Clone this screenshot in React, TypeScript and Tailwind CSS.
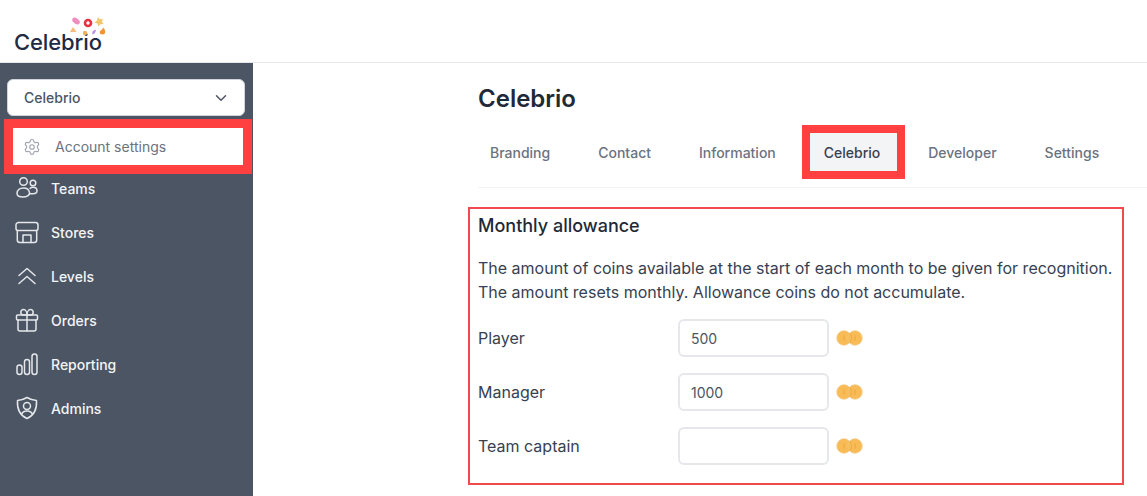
import { ChevronDown, Settings } from "lucide-react";

const font = { fontFamily: "Inter, sans-serif" };

function Logo() {
  return (
    <div className="relative w-[110px] h-[62px]">
      <span className="absolute left-[14px] top-[26px] text-[22px] leading-[32px] font-medium tracking-[-0.1px] text-[#1f2a44]">Celebrio</span>
      <svg className="absolute left-[70px] top-[17px]" width="36" height="22" viewBox="0 0 36 22">
        <ellipse cx="6" cy="4" rx="4.200" ry="2.600" transform="rotate(35 6 4)" fill="#ee8fc0" />
        <circle cx="18" cy="6" r="3" fill="none" stroke="#e8313f" strokeWidth="2.600" />
        <path d="M28 0l1.800 2.200 3-.4-.9 2.800 1.500 2.400-3 .2-2 2.200-1-2.800-2.800-1 2.400-2z" fill="#f2c66d" />
        <path d="M3 10l3.600 5H0z" fill="#f4bd7e" />
        <circle cx="15" cy="16" r="2.200" fill="#eab25c" />
        <ellipse cx="24" cy="15" rx="1.300" ry="2.600" transform="rotate(35 24 15)" fill="#b792e6" />
        <path d="M33 10.500c1.800 1.500 2.600 3.500 2 5.500-.6 1.600-3.400 2-4.800.8-1-1.200-.4-3 .8-3.600.8-.5 1.800-1.300 2-2.700z" fill="#f59331" />
      </svg>
    </div>
  );
}

const sw = { fill: "none", stroke: "#e5e7eb", strokeWidth: 1.5, strokeLinecap: "round" as const, strokeLinejoin: "round" as const };

function TeamsIcon() {
  return (
    <svg width="24" height="24" viewBox="0 0 24 24" {...sw}>
      <circle cx="8.500" cy="5.500" r="3.800" />
      <circle cx="18" cy="7" r="2.800" />
      <path d="M2 17.500c0-3.500 3-5.500 6.500-5.500 3.200 0 5.500 1.500 6 4.500.4 3-3 4.500-6.500 4.500-3.300 0-6-1.300-6-3.500z" />
      <path d="M15 12.300c1-.7 2-1 3-1 2.500 0 4 1.500 4 3.500 0 2-2 3-4 3h-3.300" />
    </svg>
  );
}
function StoreIcon() {
  return (
    <svg width="24" height="24" viewBox="0 0 24 24" {...sw}>
      <path d="M3.500 2.500h17A2.500 2.500 0 0 1 23 5v3.500a2 2 0 0 1-2 2H3a2 2 0 0 1-2-2V5a2.500 2.500 0 0 1 2.500-2.500z" />
      <path d="M2.300 10.500V20a2.500 2.500 0 0 0 2.500 2.500h14.400a2.500 2.500 0 0 0 2.500-2.500v-9.500" />
      <path d="M8 22.500v-7.500h8v7.500" />
    </svg>
  );
}
function LevelsIcon() {
  return (
    <svg width="24" height="24" viewBox="0 0 24 24" {...sw}>
      <path d="M4 11.500l8-7 8 7" />
      <path d="M4 19.500l8-7 8 7" />
    </svg>
  );
}
function GiftIcon() {
  return (
    <svg width="24" height="24" viewBox="0 0 24 24" {...sw}>
      <rect x="1.500" y="7" width="21" height="5" rx="1" />
      <path d="M3 12v9a2 2 0 0 0 2 2h14a2 2 0 0 0 2-2v-9" />
      <path d="M12 7v16" />
      <path d="M12 7H8.500a2.700 2.700 0 1 1 0-5.400C11 1.600 12 5 12 7z" />
      <path d="M12 7h3.500a2.700 2.700 0 1 0 0-5.400C13 1.600 12 5 12 7z" />
    </svg>
  );
}
function ReportIcon() {
  return (
    <svg width="24" height="24" viewBox="0 0 24 24" {...sw}>
      <rect x="2" y="13" width="5" height="9.500" rx="2.500" />
      <rect x="9.500" y="7.500" width="5" height="15" rx="2.500" />
      <rect x="17" y="2" width="5" height="20.500" rx="2.500" />
    </svg>
  );
}
function AdminIcon() {
  return (
    <svg width="24" height="24" viewBox="0 0 24 24" {...sw}>
      <path d="M12 1.500c3 1.800 6 2.700 9.500 3 .5 7.500-1.500 14.500-9.500 18-8-3.500-10-10.500-9.500-18 3.500-.3 6.500-1.200 9.500-3z" />
      <circle cx="12" cy="10" r="3.500" />
      <path d="M6.500 18.500c.8-2.500 3-3.500 5.500-3.500s4.700 1 5.500 3.500" />
    </svg>
  );
}

const menu = [
  { label: "Teams", icon: <TeamsIcon /> },
  { label: "Stores", icon: <StoreIcon /> },
  { label: "Levels", icon: <LevelsIcon /> },
  { label: "Orders", icon: <GiftIcon /> },
  { label: "Reporting", icon: <ReportIcon /> },
  { label: "Admins", icon: <AdminIcon /> },
];

function Coins() {
  return (
    <svg width="28" height="18" viewBox="0 0 28 18">
      <circle cx="8" cy="9" r="7.200" fill="#f8bb55" stroke="#f3c57a" strokeWidth="0.800" />
      <circle cx="19" cy="9" r="7.200" fill="#f8bb55" stroke="#f3c57a" strokeWidth="0.800" />
      <path d="M8 6.500v5M19 6.500v5" stroke="#e5a23c" strokeWidth="0.800" />
      <path d="M13.500 4a7.200 7.200 0 0 1 0 10" fill="none" stroke="#e9a746" strokeWidth="0.800" />
    </svg>
  );
}

const tabs = ["Branding", "Contact", "Information", "Celebrio", "Developer", "Settings"];
const rows = [
  { label: "Player", value: "500" },
  { label: "Manager", value: "1000" },
  { label: "Team captain", value: "" },
];

export default function App() {
  return (
    <div style={font} className="w-[1147px] h-[496px] overflow-hidden bg-white flex flex-col">
      <header className="h-[63px] shrink-0 border-b border-[#e5e7eb] bg-white">
        <Logo />
      </header>
      <div className="flex flex-1 min-h-0">
        <aside className="w-[253px] shrink-0 bg-[#4b5563]">
          <div className="pt-[16px] pl-[7px] pr-[8px]">
            <div className="h-[37px] rounded-md bg-white border border-[#d1d5db] flex items-center justify-between pl-4 pr-[14px] text-[14px] font-medium text-[#4b5563]">
              <span>Celebrio</span>
              <ChevronDown size={18} strokeWidth={2} color="#4b5563" />
            </div>
          </div>
          <div className="mt-[3px] ml-[4px] mr-[1px] h-[55px] border-[9px] border-[#ff4040] bg-white flex items-center pl-[10px] gap-[14px] text-[14px] font-normal text-[#6b7280]">
            <Settings size={18} strokeWidth={1.5} color="#9ca3af" />
            <span>Account settings</span>
          </div>
          <nav className="mt-[-8px] flex flex-col">
            {menu.map((m) => (
              <div key={m.label} className="h-[44px] flex items-center pl-[15px] gap-3 text-[14px] font-medium text-[#f3f4f6]">
                {m.icon}
                <span>{m.label}</span>
              </div>
            ))}
          </nav>
        </aside>
        <main className="flex-1 min-w-0 pl-[225px] pr-[23px]">
          <h1 className="mt-[20px] text-[24px] leading-[32px] font-semibold text-[#1f2937]">Celebrio</h1>
          <div className="mt-[10px] mr-[-23px] h-[63px] border-b border-[#f3f4f6] flex gap-6 items-start">
            {tabs.map((t) =>
              t === "Celebrio" ? (
                <div key={t} className="ml-[-10px] mr-[-13px] h-[54px] border-[8px] border-[#ff4040] flex items-center">
                  <span className="h-full flex items-center pl-[14px] pr-[17px] bg-[#f3f4f6] text-[14px] font-medium text-[#374151]">{t}</span>
                </div>
              ) : (
                <div key={t} className="h-[54px] px-3 flex items-center text-[14px] font-medium text-[#6b7280]">{t}</div>
              )
            )}
          </div>
          <section className="mt-[19px] ml-[-10px] h-[278px] border-2 border-[#f04a4f] pl-[8px] pr-2">
            <h2 className="mt-[3px] text-[18px] leading-[28px] font-medium text-[#1f2937]">Monthly allowance</h2>
            <p className="mt-[16px] text-[16px] leading-[24px] text-[#374151] whitespace-nowrap">
              The amount of coins available at the start of each month to be given for recognition.
              <br />
              The amount resets monthly. Allowance coins do not accumulate.
            </p>
            <div className="mt-[15px] flex flex-col gap-4">
              {rows.map((r) => (
                <div key={r.label} className="flex items-center h-[38px]">
                  <span className="w-[200px] text-[16px] text-[#374151]">{r.label}</span>
                  <div className="w-[151px] h-[38px] rounded-md border-2 border-[#e5e7eb] flex items-center pl-[11px] text-[14px] text-[#4b5563]">{r.value}</div>
                  <div className="ml-[7px] flex items-center"><Coins /></div>
                </div>
              ))}
            </div>
          </section>
        </main>
      </div>
    </div>
  );
}
